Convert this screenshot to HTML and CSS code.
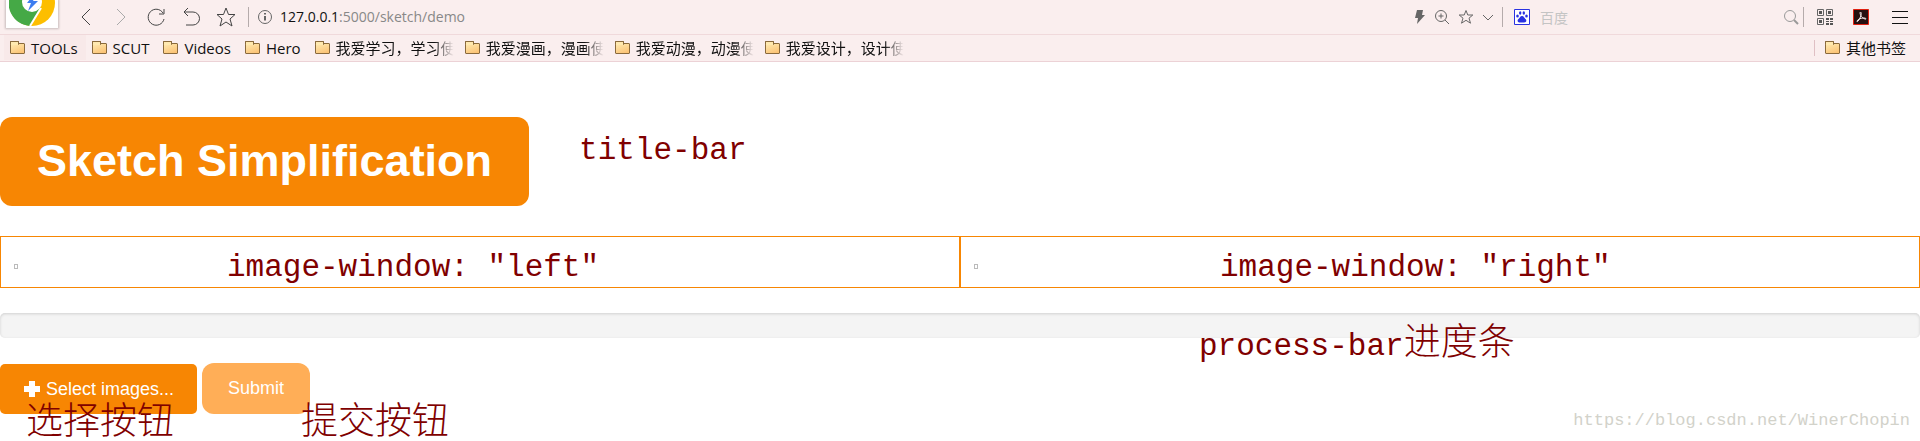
FILE: index.html
```html
<!DOCTYPE html>
<html lang="zh-CN">
<head>
    <meta charset="UTF-8">
    <meta name="viewport" content="width=device-width, initial-scale=1.0">
    <title>Sketch Simplification</title>
    <link rel="stylesheet" href="styles.css">
</head>
<body>
    <header class="browser">
        <div class="toolbar">
            <div class="logo">
                <svg width="46" height="46" viewBox="0 0 46 46">
                    <circle cx="23" cy="23" r="23" fill="#fdbe00"/>
                    <path d="M23 23L3 11A23 23 0 0 0 21 46L32 26z" fill="#45a946"/>
                    <path d="M32 28L21 46" stroke="#fff" stroke-width="2"/>
                    <path d="M3 11A23 23 0 0 1 43 12H23z" fill="#e53b30"/>
                    <circle cx="23" cy="22" r="10" fill="#fff"/>
                    <path d="M25 14l-7 9h4l-3 8 10-10h-5l3-5z" fill="#3c7df0"/>
                </svg>
            </div>
            <nav class="nav-buttons">
                <button type="button" aria-label="Back"><svg width="20" height="20" viewBox="0 0 20 20"><path d="M14 2L6 10l8 8"/></svg></button>
                <button type="button" aria-label="Forward" class="off"><svg width="20" height="20" viewBox="0 0 20 20"><path d="M6 2l8 8-8 8"/></svg></button>
                <button type="button" aria-label="Reload"><svg width="20" height="20" viewBox="0 0 20 20"><path d="M17 6A8 8 0 1 0 18 12M18 2v5h-5"/></svg></button>
                <button type="button" aria-label="Undo"><svg width="20" height="20" viewBox="0 0 20 20"><path d="M7 1L3 5l4 4M3 5h9a6 6 0 0 1 0 13H5"/></svg></button>
                <button type="button" aria-label="Favourite"><svg width="20" height="20" viewBox="0 0 20 20"><path d="M10 1l2.500 6.500H19l-5 4.500 2 7-6-4-6 4 2-7-5-4.500h6.500z"/></svg></button>
            </nav>
            <div class="address">
                <svg width="16" height="16" viewBox="0 0 16 16"><circle cx="8" cy="8" r="6.5"/><path d="M8 7v4.500M8 4v1.500" stroke-width="2"/></svg>
                <span class="url">127.0.0.1<span>:5000/sketch/demo</span></span>
            </div>
            <div class="page-tools">
                <svg width="12" height="16" viewBox="0 0 12 16"><path d="M3 1h6L8 6h3L3 15l1-6H1z" fill="#666" stroke="none"/></svg>
                <svg width="16" height="16" viewBox="0 0 16 16"><circle cx="7" cy="7" r="5.500"/><path d="M11 11l4 4M4.500 7h5M7 4.500v5"/></svg>
                <svg width="16" height="16" viewBox="0 0 16 16"><path d="M8 1.500L9.800 6h5L11 9.200l1.500 5L8 11.300l-4.500 2.900 1.500-5L1.200 6h5z"/></svg>
                <svg width="12" height="16" viewBox="0 0 12 16"><path d="M1 6l5 5 5-5"/></svg>
            </div>
            <label class="search">
                <svg width="16" height="16" viewBox="0 0 16 16"><path d="M.5.5h15v15H.5z" fill="#fff" stroke="#2932e1"/><g fill="#2932e1" stroke="none"><ellipse cx="3.500" cy="7" rx="1.300" ry="1.600"/><ellipse cx="6.200" cy="4" rx="1.200" ry="1.700"/><ellipse cx="9.800" cy="4" rx="1.200" ry="1.700"/><ellipse cx="12.500" cy="7" rx="1.300" ry="1.600"/><path d="M8 7c2 0 2 2 4 3.500 1 2-.5 3-2 3H6c-2 0-3-1.500-2-3C6 9 6 7 8 7z"/></g></svg>
                <input type="text" placeholder="百度" aria-label="百度">
                <svg class="glass" width="16" height="16" viewBox="0 0 16 16"><circle cx="7" cy="7" r="5.500"/><path d="M11 11l4 4" stroke-width="2"/></svg>
            </label>
            <div class="extensions">
                <svg width="16" height="16" viewBox="0 0 16 16"><path d="M.5.500h6v6h-6zM9.500.500h6v6h-6zM.5 9.500h6v6h-6z"/><path d="M2 2h3v3H2zM11 2h3v3h-3zM2 11h3v3H2zM9 9h3v2H9zM13 9h3v2h-3zM9 12h3v1H9zM13 12h3v1h-3zM9 14h3v2H9zM13 14h3v2h-3z" fill="#555" stroke="none"/></svg>
                <svg width="16" height="16" viewBox="0 0 16 16"><path d="M.5.500h15v15H.5z" fill="#251010" stroke="#e02010"/><path d="M7.500 3c-1.500 1 1 6 4.500 7 2 .5 1-1-1-1-3 0-6 1-7 3-.5 1.500 1.500.5 3-3s1.500-5.500.5-6z" stroke="#f4eaea"/></svg>
                <button type="button" aria-label="Menu"><svg width="16" height="16" viewBox="0 0 16 16"><path d="M0 2.500h16M0 8.500h16M0 14.500h16"/></svg></button>
            </div>
        </div>
        <nav class="bookmarks">
            <a href="#" class="hover"><i class="folder"></i>TOOLs</a>
            <a href="#"><i class="folder"></i>SCUT</a>
            <a href="#"><i class="folder"></i>Videos</a>
            <a href="#"><i class="folder"></i>Hero</a>
            <a href="#" class="long"><i class="folder"></i><span>我爱学习，学习使</span></a>
            <a href="#" class="long"><i class="folder"></i><span>我爱漫画，漫画使</span></a>
            <a href="#" class="long"><i class="folder"></i><span>我爱动漫，动漫使</span></a>
            <a href="#" class="long"><i class="folder"></i><span>我爱设计，设计使</span></a>
            <a href="#" class="other"><i class="folder"></i>其他书签</a>
        </nav>
    </header>

    <main>
        <div class="title-row">
            <h1>Sketch Simplification</h1>
            <span class="note">title-bar</span>
        </div>

        <div class="windows">
            <div class="image-window">
                <span class="empty-image"></span>
                <span class="note note-left">image-window: "left"</span>
            </div>
            <div class="image-window">
                <span class="empty-image"></span>
                <span class="note note-right">image-window: "right"</span>
            </div>
        </div>

        <div class="progress">
            <span class="note note-progress">process-bar<span class="cn">进度条</span></span>
        </div>

        <div class="actions">
            <button type="button" class="select">
                <svg width="18" height="18" viewBox="0 0 18 18"><path d="M6 1h6v5h5v6h-5v5H6v-5H1V6h5z" fill="#fff"/></svg>
                Select images...
            </button>
            <button type="submit" class="submit">Submit</button>
            <span class="note cn note-select">选择按钮</span>
            <span class="note cn note-submit">提交按钮</span>
        </div>
    </main>
    <div class="watermark">https://blog.csdn.net/WinerChopin</div>
</body>
</html>
```
FILE: styles.css
```css
* {
    box-sizing: border-box;
}
body {
    position: relative;
    min-height: 100vh;
    margin: 0;
    background-color: #fff;
    font-family: "Liberation Sans", Arial, sans-serif;
}
button {
    border: none;
    cursor: pointer;
}
svg {
    display: block;
    flex: none;
    fill: none;
}

/* browser bars */
.browser {
    background-color: #faeeee;
    font-family: "Open Sans", "Noto Sans CJK SC", sans-serif;
    font-size: 15px;
    line-height: 20px;
    color: #111;
}
.toolbar {
    display: flex;
    align-items: center;
    height: 35px;
    padding: 0 12px 6px 6px;
    border-bottom: 1px solid #f0d9db;
}
.toolbar svg {
    stroke: #666;
}
.toolbar button {
    padding: 0;
    background: none;
}
.toolbar .logo {
    align-self: flex-start;
    display: flex;
    align-items: flex-end;
    justify-content: center;
    width: 52px;
    height: 28px;
    padding-bottom: 2px;
    background-color: #fff;
    box-shadow: 0 0 2px 1px #c8bcbc;
    overflow: hidden;
}
.toolbar .logo svg {
    stroke: none;
}
.nav-buttons {
    display: flex;
    gap: 15px;
    padding: 6px 12px 0 18px;
}
.toolbar .nav-buttons svg {
    stroke: #444;
}
.toolbar .nav-buttons .off svg {
    stroke: #aaa;
}
.address {
    display: flex;
    align-items: center;
    gap: 7px;
    height: 20px;
    margin-top: 6px;
    padding-left: 8px;
    border-left: 1px solid #b5abab;
    font-size: 14px;
}
.url span {
    color: #888;
}
.page-tools {
    display: flex;
    align-items: center;
    gap: 8px;
    margin: 6px 8px 0 auto;
}
.search {
    display: flex;
    align-items: center;
    width: 302px;
    height: 20px;
    margin-top: 6px;
    padding: 0 4px 0 11px;
    border: 1px solid #b5abab;
    border-width: 0 1px;
}
.search input {
    flex: 1;
    min-width: 0;
    padding: 0 10px;
    border: none;
    background: none;
    font: 14px "Noto Sans CJK SC", sans-serif;
}
.search input::placeholder {
    color: #c4c4c4;
}
.toolbar .glass {
    stroke: #999;
}
.extensions {
    display: flex;
    gap: 20px;
    padding: 6px 0 0 13px;
}
.extensions button {
    margin-left: 3px;
}
.extensions button svg {
    stroke: #111;
}
.bookmarks {
    display: flex;
    height: 27px;
    padding: 0 6px 1px 4px;
    border-bottom: 1px solid #ecd2d6;
}
.bookmarks a {
    display: flex;
    align-items: center;
    gap: 6px;
    padding: 0 8px 0 6px;
    color: #111;
    text-decoration: none;
    white-space: nowrap;
}
.bookmarks .hover {
    background-color: #f8e9e9;
}
.bookmarks .long {
    padding-right: 3px;
}
.long span {
    mask-image: linear-gradient(to right, #000 82%, transparent 98%);
}
.bookmarks .other {
    margin-left: auto;
}
.other::before {
    content: "";
    height: 16px;
    margin-right: 4px;
    border-left: 1px solid #dfc0c4;
}
.folder {
    position: relative;
    width: 15px;
    height: 11px;
    margin-top: 2px;
    border: 1px solid #8a6a3c;
    border-radius: 1px;
    background: linear-gradient(160deg, #ffe9b0, #fbc070);
}
.folder::before {
    content: "";
    position: absolute;
    left: -1px;
    top: -3px;
    width: 7px;
    height: 3px;
    border: 1px solid #8a6a3c;
    border-bottom: none;
    border-radius: 1px;
    background-color: #ffe9b0;
}

/* page */
.title-row {
    display: flex;
    align-items: flex-start;
    gap: 50px;
    margin: 55px 0 30px;
}
h1 {
    margin: 0;
    padding: 18px 37px 19px;
    border-radius: 12px;
    background-color: #f78603;
    color: #fff;
    font-size: 45px;
    line-height: 52px;
}
.note {
    color: #800000;
    font-family: "Liberation Mono", "Noto Sans CJK SC", monospace;
    font-size: 31px;
    line-height: 36px;
    white-space: nowrap;
}
.title-row .note {
    margin-top: 16px;
}
.cn {
    font-size: 37px;
    font-weight: 300;
}
.windows {
    display: flex;
}
.image-window {
    position: relative;
    flex: 1;
    height: 52px;
    padding: 27px 13px 0;
    border: 1px solid #f78603;
}
.empty-image {
    display: block;
    width: 4px;
    height: 5px;
    border: 1px solid #bbb;
}
.windows .note,
.progress .note,
.actions .note {
    position: absolute;
}
.note-left {
    left: 226px;
    top: 13px;
}
.note-right {
    left: 259px;
    top: 13px;
}
.progress {
    position: relative;
    height: 25px;
    margin: 25px 0;
    border-radius: 5px;
    background-color: #f4f4f4;
    box-shadow: inset 0 1px 3px rgba(0, 0, 0, 0.15);
}
.note-progress {
    left: 1199px;
    top: 14px;
}
.actions {
    position: relative;
    display: flex;
    align-items: flex-end;
    gap: 5px;
}
.actions button {
    height: 50px;
    padding: 0 23px;
    border-radius: 5px;
    background-color: #f78603;
    color: #fff;
    font-family: inherit;
    font-size: 18px;
}
.actions .select {
    display: flex;
    align-items: center;
    gap: 5px;
}
.actions .submit {
    height: 51px;
    padding: 0 26px;
    border-radius: 12px;
    background-color: #ffae57;
}
.actions .note {
    top: 47px;
    line-height: 28px;
}
.note-select {
    left: 26px;
}
.note-submit {
    left: 301px;
}
.watermark {
    position: absolute;
    right: 10px;
    bottom: 10px;
    color: #d2d2ca;
    font: 17px/20px "Liberation Mono", monospace;
}
```
